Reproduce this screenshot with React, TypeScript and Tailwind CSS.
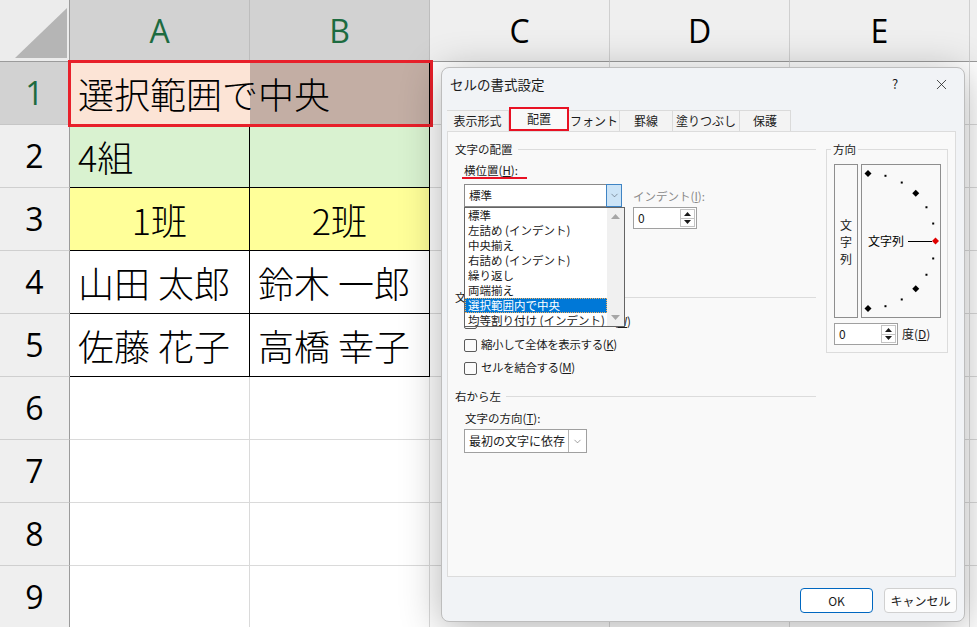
import { Fragment } from "react";
import { ChevronDown, X } from "lucide-react";

const COLS = ["A", "B", "C", "D", "E", "F"];
const ROWS = [1, 2, 3, 4, 5, 6, 7, 8, 9];

type CellDef = { text?: string; cls: string };

const filled: Record<string, CellDef> = {
  "1A": { text: "選択範囲で中央", cls: "relative z-10 bg-[#fce4d6] border-b border-black pl-2 justify-start" },
  "1B": { cls: "bg-[#c3aea4] border-r border-b border-black" },
  "2A": { text: "4組", cls: "bg-[#d9f2d0] border-r border-b border-black pl-2 justify-start" },
  "2B": { cls: "bg-[#d9f2d0] border-r border-b border-black" },
  "3A": { text: "1班", cls: "bg-[#ffff99] border-r border-b border-black justify-center" },
  "3B": { text: "2班", cls: "bg-[#ffff99] border-r border-b border-black justify-center" },
  "4A": { text: "山田 太郎", cls: "bg-white border-r border-b border-black pl-2 justify-start" },
  "4B": { text: "鈴木 一郎", cls: "bg-white border-r border-b border-black pl-2 justify-start" },
  "5A": { text: "佐藤 花子", cls: "bg-white border-r border-b border-black pl-2 justify-start" },
  "5B": { text: "高橋 幸子", cls: "bg-white border-r border-b border-black pl-2 justify-start" },
};

function Sheet() {
  return (
    <div className="grid grid-cols-[70px_180px_180px_180px_180px_180px_180px] grid-rows-[62px_repeat(9,63px)]">
      <div className="relative bg-[#ececec] border-r border-b border-[#9b9b9b]">
        <svg width="70" height="62" className="absolute left-0 top-0">
          <polygon points="15,58 67,58 67,8" fill="#b5b5b5" />
        </svg>
      </div>
      {COLS.map((c) => {
        const sel = c === "A" || c === "B";
        return (
          <div
            key={c}
            className={
              sel
                ? "flex items-center justify-center bg-[#d2d2d2] border-r border-b border-r-[#bdbdbd] border-b-[#9b9b9b] text-[#1d6b40] font-['Open_Sans',sans-serif] text-[32px]"
                : "flex items-center justify-center bg-[#efefef] border-r border-b border-r-[#cfcfcf] border-b-[#9b9b9b] text-black font-['Open_Sans',sans-serif] text-[32px]"
            }
          >
            {c === "F" ? "" : c}
          </div>
        );
      })}
      {ROWS.map((r) => (
        <Fragment key={r}>
          <div
            className={
              r === 1
                ? "flex items-center justify-center bg-[#d2d2d2] border-r border-b border-r-[#9b9b9b] border-b-[#c6c6c6] text-[#1d6b40] font-['Open_Sans',sans-serif] text-[32px]"
                : "flex items-center justify-center bg-[#efefef] border-r border-b border-r-[#9b9b9b] border-b-[#cfcfcf] text-black font-['Open_Sans',sans-serif] text-[32px]"
            }
          >
            {r}
          </div>
          {COLS.map((c) => {
            const def = filled[`${r}${c}`];
            if (def) {
              return (
                <div
                  key={c}
                  className={`flex items-center whitespace-nowrap text-[36px] font-light leading-none text-black ${def.cls}`}
                >
                  {def.text}
                </div>
              );
            }
            return <div key={c} className="bg-white border-r border-b border-[#dadada]" />;
          })}
        </Fragment>
      ))}
    </div>
  );
}

function SpinTri({ down }: { down?: boolean }) {
  return (
    <svg width="7" height="4" viewBox="0 0 7 4">
      <path d={down ? "M0 0 L7 0 L3.5 4 Z" : "M0 4 L3.5 0 L7 4 Z"} fill="#1a1a1a" />
    </svg>
  );
}

function Spinner({ w }: { w: string }) {
  return (
    <div className={`flex h-[22px] border border-[#a0a0a0] bg-white ${w}`}>
      <span className="flex-1 pl-[4px] leading-[20px] text-[12px]">0</span>
      <div className="my-[1px] mr-[1px] flex w-[15px] flex-col border border-[#c4c4c4]">
        <div className="flex flex-1 items-center justify-center border-b border-[#c4c4c4]">
          <SpinTri />
        </div>
        <div className="flex flex-1 items-center justify-center">
          <SpinTri down />
        </div>
      </div>
    </div>
  );
}

function GroupHead({ label }: { label: string }) {
  return (
    <div className="flex h-[16px] items-center">
      <span className="leading-[16px]">{label}</span>
      <div className="ml-[5px] flex-1 border-t border-[#dcdcdc]" />
    </div>
  );
}

function CheckRow({ label, k, cls }: { label: string; k: string; cls: string }) {
  return (
    <div className={`flex h-[18px] items-center pl-[9px] ${cls}`}>
      <div className="h-[13px] w-[13px] rounded-[2px] border border-[#5a5a5a] bg-[#fbfbfb]" />
      <span className="ml-[4px] whitespace-nowrap tracking-[-0.4px]">
        {label}(<u>{k}</u>)
      </span>
    </div>
  );
}

const listItems = [
  "標準",
  "左詰め (インデント)",
  "中央揃え",
  "右詰め (インデント)",
  "繰り返し",
  "両端揃え",
  "選択範囲内で中央",
  "均等割り付け (インデント)",
];

function DropList() {
  return (
    <div className="absolute left-[-1px] top-[22px] z-10 flex h-[120px] w-[161px] border border-[#646464] bg-white">
      <div className="flex-1">
        {listItems.map((t, i) => (
          <div
            key={t}
            className={
              i === 6
                ? "h-[15px] whitespace-nowrap bg-[#0078d7] pl-[3px] leading-[14px] text-white outline-1 outline-dotted outline-[#f0b060] -outline-offset-1"
                : "h-[15px] whitespace-nowrap pl-[3px] leading-[15px]"
            }
          >
            {t}
          </div>
        ))}
      </div>
      <div className="flex w-[17px] flex-col items-center justify-between bg-[#f0f0f0] py-[6px]">
        <svg width="9" height="5" viewBox="0 0 9 5">
          <path d="M0 5 L4.5 0 L9 5 Z" fill="#a6a6a6" />
        </svg>
        <svg width="9" height="5" viewBox="0 0 9 5">
          <path d="M0 0 L9 0 L4.5 5 Z" fill="#a6a6a6" />
        </svg>
      </div>
    </div>
  );
}

function OrientationArc() {
  const cx = 6;
  const cy = 76;
  const r = 67.5;
  const marks = [];
  for (let a = -90; a <= 90; a += 15) {
    const rad = (a * Math.PI) / 180;
    const x = cx + r * Math.cos(rad);
    const y = cy + r * Math.sin(rad);
    if (a % 45 === 0) {
      const s = 3.5;
      marks.push(
        <polygon
          key={a}
          points={`${x},${y - s} ${x + s},${y} ${x},${y + s} ${x - s},${y}`}
          fill={a === 0 ? "#e00000" : "#000"}
        />
      );
    } else {
      marks.push(<rect key={a} x={x - 1} y={y - 1} width="2" height="2" fill="#000" />);
    }
  }
  return (
    <svg width="78" height="152" viewBox="0 0 78 152">
      {marks}
      <line x1="46" y1="76.5" x2="70" y2="76.5" stroke="#000" strokeWidth="1" />
      <text x="6" y="81" fontSize="12" fill="#000">
        文字列
      </text>
    </svg>
  );
}

const tabs = [
  { t: "表示形式", w: "w-[62px]" },
  { t: "配置", w: "w-[60px]", sel: true },
  { t: "フォント", w: "w-[51px]" },
  { t: "罫線", w: "w-[53px]" },
  { t: "塗りつぶし", w: "w-[67px]" },
  { t: "保護", w: "w-[51px]" },
];

function Dialog() {
  return (
    <div className="absolute left-[441px] top-[67px] z-30 w-[524px] rounded-[8px] border border-[#bdbdbd] bg-[#f1f3f6] text-[11.5px] text-[#1b1b1b] shadow-[0_6px_40px_rgba(0,0,0,0.3)]">
      <div className="flex h-[32px] items-center">
        <span className="flex-1 pl-[8px] text-[13.5px]">セルの書式設定</span>
        <span className="w-[46px] text-center text-[13px]">?</span>
        <span className="flex w-[46px] justify-center">
          <X size={17} strokeWidth={1.1} />
        </span>
      </div>
      <div className="ml-[5px] mt-[7px] flex h-[24px] items-end">
        {tabs.map((tb) => (
          <div
            key={tb.t}
            className={
              tb.sel
                ? `flex h-[24px] items-center justify-center border-2 border-[#e81123] bg-[#f9f9f9] text-[12px] ${tb.w}`
                : `flex h-[21px] items-center justify-center border-t border-r border-[#dadada] bg-[#f3f3f3] text-[12px] ${tb.w}`
            }
          >
            {tb.t}
          </div>
        ))}
      </div>
      <div className="ml-[5px] flex h-[446px] w-[509px] items-start border border-[#dcdcdc] bg-[#f9f9f9] pl-[7px] pt-[9px]">
        <div className="flex w-[361px] flex-col">
          <GroupHead label="文字の配置" />
          <div className="mt-[6px] flex pl-[9px]">
            <div className="w-[158px]">
              <div className="-ml-[2px] h-[16px] w-[65px] border-b-2 border-[#e81123] pl-[2px] leading-[14px]">
                横位置(<u>H</u>):
              </div>
              <div className="relative mt-[5px] flex h-[23px] w-[158px] border border-r-0 border-[#8a8a8a] bg-white">
                <span className="flex-1 pl-[4px] leading-[21px]">標準</span>
                <span className="-my-px flex h-[23px] w-[16px] items-center justify-center border border-[#3f84c4] bg-[#cce4f7]">
                  <ChevronDown size={11} strokeWidth={1.3} color="#505a66" />
                </span>
                <DropList />
              </div>
            </div>
            <div className="ml-[11px] mt-[25px] w-[64px]">
              <div className="h-[16px] whitespace-nowrap leading-[16px] text-[#8a8a8a]">
                インデント(<u>I</u>):
              </div>
              <div className="mt-[3px]">
                <Spinner w="w-[64px]" />
              </div>
            </div>
          </div>
          <div className="mt-[60px]">
            <GroupHead label="文字の制御" />
          </div>
          <CheckRow label="折り返して全体を表示する" k="W" cls="mt-[8px]" />
          <CheckRow label="縮小して全体を表示する" k="K" cls="mt-[5px]" />
          <CheckRow label="セルを結合する" k="M" cls="mt-[5px]" />
          <div className="mt-[11px]">
            <GroupHead label="右から左" />
          </div>
          <div className="mt-[6px] h-[16px] pl-[10px] leading-[16px]">
            文字の方向(<u>T</u>):
          </div>
          <div className="ml-[9px] mt-[3px] flex h-[24px] w-[123px] border border-[#a0a0a0] bg-white">
            <span className="flex-1 whitespace-nowrap pl-[4px] leading-[22px] text-[12px]">最初の文字に依存</span>
            <span className="flex w-[18px] items-center justify-center border-l border-[#b4b4b4]">
              <ChevronDown size={11} strokeWidth={1.3} color="#606060" />
            </span>
          </div>
        </div>
        <fieldset className="ml-[10px] w-[122px] border border-[#dcdcdc] px-[4px] pb-[7px]">
          <legend className="h-[16px] px-[2px] leading-[16px]">方向</legend>
          <div className="ml-[3px] mt-[7px] flex gap-[3px]">
            <div className="flex h-[154px] w-[24px] flex-col items-center justify-center border border-[#8e8e8e] text-[12px] leading-[17px]">
              <span>文</span>
              <span>字</span>
              <span>列</span>
            </div>
            <div className="h-[154px] w-[80px] border border-[#8e8e8e]">
              <OrientationArc />
            </div>
          </div>
          <div className="ml-[3px] mt-[5px] flex items-center">
            <Spinner w="w-[64px]" />
            <span className="ml-[4px] whitespace-nowrap text-[12px]">
              度(<u>D</u>)
            </span>
          </div>
        </fieldset>
      </div>
      <div className="mt-[11px] flex justify-end gap-[11px] pb-[8px] pr-[7px]">
        <button className="h-[25px] w-[73px] rounded-[4px] border-[1.5px] border-[#0067c0] bg-white text-[12px]">
          OK
        </button>
        <button className="h-[25px] w-[73px] rounded-[4px] border border-[#d0d0d0] bg-[#fdfdfd] text-[12px]">
          キャンセル
        </button>
      </div>
    </div>
  );
}

export default function App() {
  return (
    <div className="relative h-[627px] w-[977px] overflow-hidden bg-white font-['Noto_Sans_CJK_JP',sans-serif]">
      <Sheet />
      <div className="absolute left-[68px] top-[60px] z-20 h-[67px] w-[365px] border-[3px] border-[#e8202a]" />
      <Dialog />
    </div>
  );
}
